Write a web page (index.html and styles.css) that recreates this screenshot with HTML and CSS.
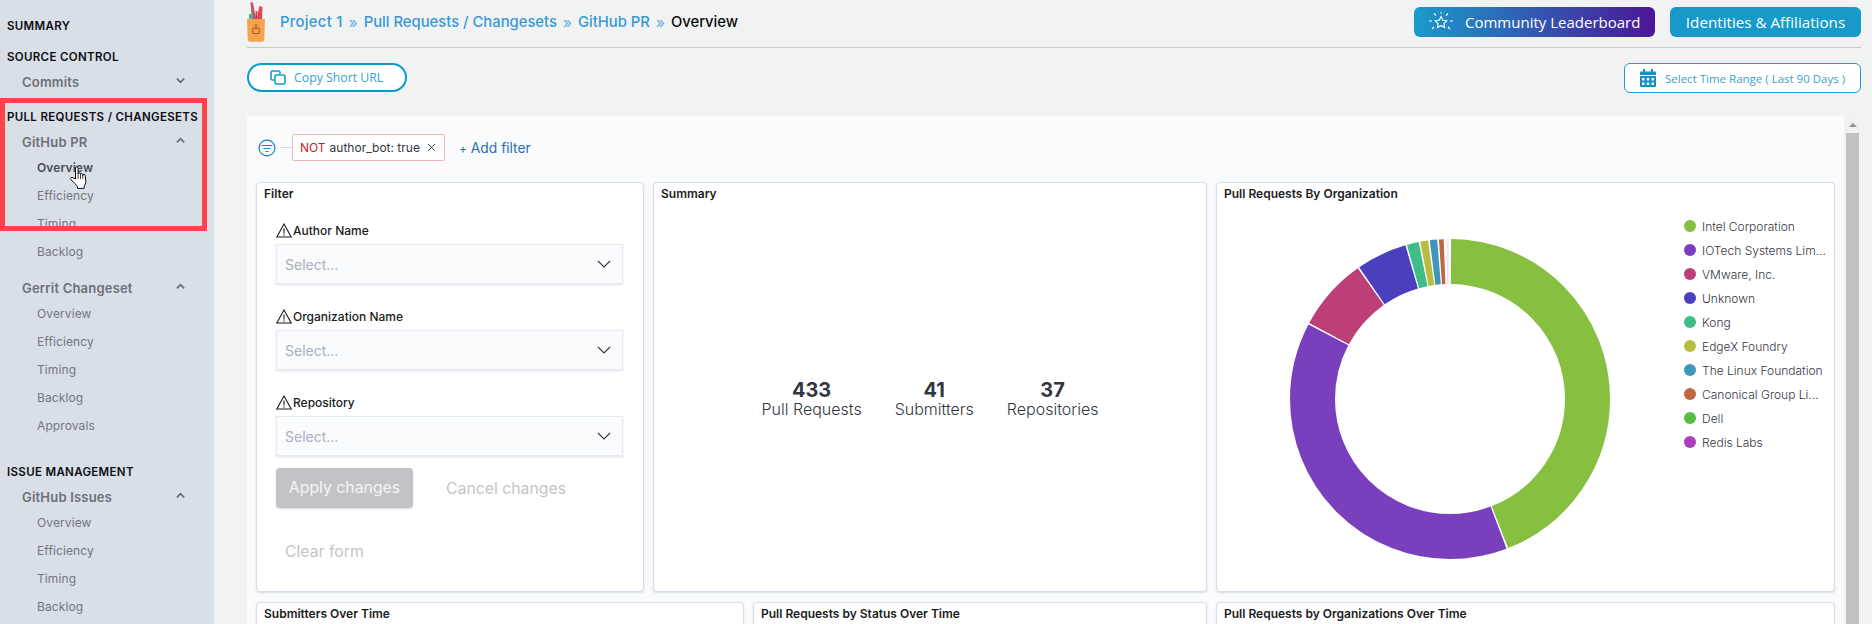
FILE: index.html
```html
<!DOCTYPE html>
<html lang="en">
<head>
<meta charset="utf-8">
<title>GitHub PR Overview</title>
<link rel="stylesheet" href="styles.css">
</head>
<body>
<aside class="sidebar">
  <h3 class="sec sec-first">SUMMARY</h3>
  <h3 class="sec sec-source">SOURCE CONTROL</h3>
  <div class="grp"><span>Commits</span><svg class="chev" viewBox="0 0 10 7"><path d="M1 1.500l4 4 4-4"/></svg></div>
  <h3 class="sec sec-pr">PULL REQUESTS / CHANGESETS</h3>
  <div class="grp"><span>GitHub PR</span><svg class="chev" viewBox="0 0 10 7"><path d="M1 5.500l4-4 4 4"/></svg></div>
  <ul class="subs">
    <li class="active">Overview</li><li>Efficiency</li><li>Timing</li><li>Backlog</li>
  </ul>
  <div class="grp grp-gerrit"><span>Gerrit Changeset</span><svg class="chev" viewBox="0 0 10 7"><path d="M1 5.500l4-4 4 4"/></svg></div>
  <ul class="subs">
    <li>Overview</li><li>Efficiency</li><li>Timing</li><li>Backlog</li><li>Approvals</li>
  </ul>
  <h3 class="sec sec-issue">ISSUE MANAGEMENT</h3>
  <div class="grp"><span>GitHub Issues</span><svg class="chev" viewBox="0 0 10 7"><path d="M1 5.500l4-4 4 4"/></svg></div>
  <ul class="subs">
    <li>Overview</li><li>Efficiency</li><li>Timing</li><li>Backlog</li>
  </ul>
</aside>

<main class="main">
  <header class="topbar">
    <svg class="logo" viewBox="0 0 18 40">
      <path d="M3.500 0l2.500.5 3 17H5z" fill="#c4546a"/>
      <path d="M9.500 17l3-13 3 1-.5 12z" fill="#e2494f"/>
      <path d="M8 17l.8-8 1.700.3-.5 7.700z" fill="#c9455a"/>
      <rect x="2" y="12" width="4" height="5" fill="#4fae9b"/>
      <path d="M0 17h18l-.8 21q-.1 1.800-2 1.800H2.800q-1.900 0-2-1.800z" fill="#f7a24d"/>
      <path d="M5.800 26h6.400v5.500H5.800zM9 22.500v5M7.500 24L9 22.500l1.500 1.500" fill="none" stroke="#a5602a" stroke-width="1"/>
    </svg>
    <nav class="crumbs">
      <a>Project 1</a><i>»</i><a>Pull Requests / Changesets</a><i>»</i><a>GitHub PR</a><i>»</i><b>Overview</b>
    </nav>
    <button class="btn-top btn-grad">
      <svg class="star" viewBox="0 0 24 20" fill="none" stroke="#fff" stroke-width="1.100">
        <path d="M12 4.500l1.800 3.700 4 .6-2.900 2.800.7 4-3.600-1.900-3.600 1.900.7-4-2.900-2.800 4-.6z"/>
        <path d="M5 1.500l2 2M19 1.500l-2 2M0 9h3M21 9h3M3 17l2-2M21 17l-2-2M12 0v1.500"/>
      </svg>
      Community Leaderboard
    </button>
    <button class="btn-top btn-plain">Identities &amp; Affiliations</button>
  </header>

  <div class="toolbar">
    <button class="btn-copy">
      <svg class="ico-copy" viewBox="0 0 16 15" fill="none" stroke="#159ac9" stroke-width="1.600">
        <path d="M4 10H2.500Q1 10 1 8.500V2.500Q1 1 2.500 1h6Q10 1 10 2.500V4"/>
        <rect x="5" y="5" width="10" height="9" rx="1.500"/>
      </svg>
      Copy Short URL
    </button>
    <button class="btn-range">
      <svg class="ico-cal" viewBox="0 0 16 18" fill="#1390c4">
        <rect x="3" y="0" width="2" height="4"/><rect x="11" y="0" width="2" height="4"/>
        <path d="M0 3.500q0-1 1-1h14q1 0 1 1V6H0z"/>
        <path fill-rule="evenodd" d="M0 7h16v10q0 1-1 1H1q-1 0-1-1zM2 9v2.500h2.500V9zM6.700 9v2.500h2.600V9zM11.500 9v2.500H14V9zM2 13.500V16h2.500v-2.500zM6.700 13.500V16h2.600v-2.500zM11.500 13.500V16H14v-2.500z"/>
      </svg>
      Select Time Range ( Last 90 Days )
    </button>
  </div>

  <div class="content">
    <section class="panel">
      <div class="filterbar">
        <svg class="ico-filter" viewBox="0 0 18 18" fill="none" stroke="#1f7fc4" stroke-width="1.200">
          <circle cx="9" cy="9" r="7.900"/><path d="M3.500 6.500h11M5.500 9.500h7M7.500 12.500h3"/>
        </svg>
        <span class="link-line"></span>
        <span class="pill"><span class="pill-not">NOT</span><span class="pill-text">author_bot: true</span>
          <svg class="ico-x" viewBox="0 0 10 10" fill="none" stroke="#343741" stroke-width="1"><path d="M1 1l8 8M9 1l-8 8"/></svg>
        </span>
        <a class="addfilter"><span class="plus">+</span> Add filter</a>
      </div>

      <div class="row row-a">
        <article class="card">
          <h4 class="card-title">Filter</h4>
          <form class="form">
            <div class="field">
              <label class="lab"><svg class="warn" viewBox="0 0 16 15" fill="none" stroke="#1a1c21" stroke-width="1.100"><path d="M8 1L.8 14h14.400z"/><path d="M8 5.500v5M8 11.500v1.300"/></svg>Author Name</label>
              <div class="select"><span>Select...</span><svg class="sel-chev" viewBox="0 0 14 8" fill="none" stroke="#343741" stroke-width="1.100"><path d="M1 1l6 6 6-6"/></svg></div>
            </div>
            <div class="field">
              <label class="lab"><svg class="warn" viewBox="0 0 16 15" fill="none" stroke="#1a1c21" stroke-width="1.100"><path d="M8 1L.8 14h14.400z"/><path d="M8 5.500v5M8 11.500v1.300"/></svg>Organization Name</label>
              <div class="select"><span>Select...</span><svg class="sel-chev" viewBox="0 0 14 8" fill="none" stroke="#343741" stroke-width="1.100"><path d="M1 1l6 6 6-6"/></svg></div>
            </div>
            <div class="field">
              <label class="lab"><svg class="warn" viewBox="0 0 16 15" fill="none" stroke="#1a1c21" stroke-width="1.100"><path d="M8 1L.8 14h14.400z"/><path d="M8 5.500v5M8 11.500v1.300"/></svg>Repository</label>
              <div class="select"><span>Select...</span><svg class="sel-chev" viewBox="0 0 14 8" fill="none" stroke="#343741" stroke-width="1.100"><path d="M1 1l6 6 6-6"/></svg></div>
            </div>
            <div class="actions">
              <span class="apply">Apply changes</span>
              <span class="cancel">Cancel changes</span>
            </div>
            <span class="clear">Clear form</span>
          </form>
        </article>

        <article class="card">
          <h4 class="card-title">Summary</h4>
          <div class="stats">
            <div class="stat"><strong>433</strong><span>Pull Requests</span></div>
            <div class="stat"><strong>41</strong><span>Submitters</span></div>
            <div class="stat"><strong>37</strong><span>Repositories</span></div>
          </div>
        </article>

        <article class="card">
          <h4 class="card-title">Pull Requests By Organization</h4>
          <div class="pie-body">
            <svg class="donut" viewBox="0 0 320 320">
              <g fill="none" stroke-width="45" transform="rotate(-90 160 160)">
                <circle cx="160" cy="160" r="137.500" pathLength="360" stroke="#87bf40" stroke-dasharray="158.300 360" stroke-dashoffset="-0.400"/>
                <circle cx="160" cy="160" r="137.500" pathLength="360" stroke="#7a3fbd" stroke-dasharray="138.500 360" stroke-dashoffset="-159.300"/>
                <circle cx="160" cy="160" r="137.500" pathLength="360" stroke="#bd3f77" stroke-dasharray="26.400 360" stroke-dashoffset="-298.400"/>
                <circle cx="160" cy="160" r="137.500" pathLength="360" stroke="#4a3fbd" stroke-dasharray="18.400 360" stroke-dashoffset="-325.400"/>
                <circle cx="160" cy="160" r="137.500" pathLength="360" stroke="#3fbd88" stroke-dasharray="4.300 360" stroke-dashoffset="-344.400"/>
                <circle cx="160" cy="160" r="137.500" pathLength="360" stroke="#b9bd3f" stroke-dasharray="2.800 360" stroke-dashoffset="-349.300"/>
                <circle cx="160" cy="160" r="137.500" pathLength="360" stroke="#3f96bd" stroke-dasharray="2.700 360" stroke-dashoffset="-352.700"/>
                <circle cx="160" cy="160" r="137.500" pathLength="360" stroke="#bd663f" stroke-dasharray="1.700 360" stroke-dashoffset="-356"/>
                <circle cx="160" cy="160" r="137.500" pathLength="360" stroke="#e8e4ee" stroke-dasharray="0.500 360" stroke-dashoffset="-358.600"/>
                <circle cx="160" cy="160" r="137.500" pathLength="360" stroke="#e8e4ee" stroke-dasharray="0.300 360" stroke-dashoffset="-359.300"/>
              </g>
            </svg>
            <ul class="legend">
              <li><i class="dot d1"></i><span>Intel Corporation</span></li>
              <li><i class="dot d2"></i><span>IOTech Systems Lim...</span></li>
              <li><i class="dot d3"></i><span>VMware, Inc.</span></li>
              <li><i class="dot d4"></i><span>Unknown</span></li>
              <li><i class="dot d5"></i><span>Kong</span></li>
              <li><i class="dot d6"></i><span>EdgeX Foundry</span></li>
              <li><i class="dot d7"></i><span>The Linux Foundation</span></li>
              <li><i class="dot d8"></i><span>Canonical Group Li...</span></li>
              <li><i class="dot d9"></i><span>Dell</span></li>
              <li><i class="dot d10"></i><span>Redis Labs</span></li>
            </ul>
          </div>
        </article>
      </div>

      <div class="row row-b">
        <article class="card"><h4 class="card-title">Submitters Over Time</h4></article>
        <article class="card"><h4 class="card-title">Pull Requests by Status Over Time</h4></article>
        <article class="card"><h4 class="card-title">Pull Requests by Organizations Over Time</h4></article>
      </div>
    </section>
    <div class="scroll">
      <span class="scroll-up"></span>
      <span class="scroll-thumb"></span>
    </div>
  </div>
</main>

<div class="highlight"></div>
<svg class="hand" viewBox="0 0 18 23">
  <path d="M5.500 13V2.200Q5.500.7 6.800.7t1.300 1.500V8q0-1.100 1.200-1.100T10.500 8v.6q0-1 1.100-1t1.200 1v.8q0-1 1.100-1t1.300 1.100l.6 5.600q.2 2-.8 3.700l-.8 1.400v2.200H7.500v-1.500q-.6-1.300-2.500-3.200L1 13.500q-.7-1 0-1.700.9-.8 2-.1z" fill="#fff" stroke="#111" stroke-width="1" stroke-linejoin="round"/>
  <path d="M8.100 8v5M10.500 8.500V13M12.800 9v4" fill="none" stroke="#111" stroke-width=".8"/>
</svg>
</body>
</html>
```

FILE: styles.css
```css
* { box-sizing: border-box; }
html, body { margin: 0; height: 624px; overflow: hidden; }
body {
  display: flex;
  background: #f1f3f3;
  font-family: Inter, "Liberation Sans", sans-serif;
  color: #343741;
}
h3, h4, ul { margin: 0; padding: 0; list-style: none; }

/* sidebar */
.sidebar {
  flex: 0 0 214px;
  height: 624px;
  overflow: hidden;
  background: #d9dfe7;
  padding-top: 14px;
}
.sec {
  height: 24px;
  line-height: 24px;
  padding-left: 7px;
  font-size: 11.500px;
  font-weight: 600;
  color: #0b0d12;
  white-space: nowrap;
  letter-spacing: .33px;
}
.sec-source { margin-top: 7px; }
.sec-pr { margin-top: 10px; }
.sec-issue { margin-top: 20px; }
.grp {
  display: flex;
  align-items: center;
  justify-content: space-between;
  height: 26px;
  padding: 0 29px 0 22px;
  font-size: 13px;
  font-weight: 600;
  letter-spacing: .2px;
  color: #6c7077;
}
.grp-gerrit { margin-top: 9px; }
.chev {
  width: 9px;
  height: 7px;
  margin-top: -4px;
  fill: none;
  stroke: #676b72;
  stroke-width: 2;
}
.subs { margin-top: -1px; }
.subs li {
  height: 28px;
  line-height: 28px;
  padding-left: 37px;
  font-size: 12px;
  letter-spacing: .1px;
  color: #72767d;
}
.subs .active { color: #4a4e55; font-weight: 600; }

/* main */
.main {
  flex: 1;
  min-width: 0;
  height: 624px;
  overflow: hidden;
  padding: 0 11px 0 33px;
}
.topbar {
  display: flex;
  align-items: center;
  height: 48px;
  border-bottom: 1px solid #c9c9c9;
  padding-bottom: 3px;
}
.logo { width: 18px; height: 40px; margin-top: 2px; flex: none; align-self: flex-start; }
.crumbs {
  flex: 1;
  display: flex;
  align-items: center;
  margin-left: 15px;
  font-size: 14.800px;
  font-weight: 500;
  white-space: nowrap;
}
.crumbs a { color: #3a97d8; }
.crumbs a:first-child { letter-spacing: .3px; }
.crumbs b { color: #0a0c10; font-weight: 500; }
.crumbs i {
  width: 21px;
  text-align: center;
  font-style: normal;
  color: #6fb3e3;
  font-size: 15px;
}
.btn-top {
  display: flex;
  align-items: center;
  height: 30px;
  border: 0;
  border-radius: 6px;
  color: #fff;
  font-family: "Open Sans", sans-serif;
  font-size: 15px;
  padding: 0;
  flex: none;
  white-space: nowrap;
}
.btn-grad {
  width: 241px;
  padding-left: 15px;
  background: linear-gradient(90deg, #1a9bca, #4c1697);
}
.star { width: 24px; height: 20px; margin-right: 12px; }
.btn-plain {
  width: 191px;
  margin-left: 15px;
  justify-content: center;
  background: #179ac9;
  font-size: 15.200px;
}
.toolbar {
  display: flex;
  justify-content: space-between;
  margin-top: 15px;
  height: 30px;
}
.btn-copy {
  display: flex;
  align-items: center;
  width: 160px;
  height: 29px;
  padding: 0 0 0 21px;
  border: 2px solid #0b9ac9;
  border-radius: 15px;
  background: #fff;
  color: #3d9fcb;
  font-family: "Open Sans", sans-serif;
  font-size: 12.300px;
  white-space: nowrap;
}
.ico-copy { width: 16px; height: 15px; margin-right: 8px; }
.btn-range {
  display: flex;
  align-items: center;
  width: 237px;
  height: 30px;
  padding: 0 0 0 15px;
  border: 1px solid #1a9bca;
  border-radius: 6px;
  background: #fff;
  color: #3d9fcb;
  font-family: "Open Sans", sans-serif;
  font-size: 11.500px;
  white-space: nowrap;
}
.ico-cal { width: 16px; height: 18px; margin-right: 9px; }

.content { display: flex; margin-top: 23px; height: 508px; }
.panel {
  flex: 1;
  min-width: 0;
  overflow: hidden;
  background: #fafbfd;
  padding: 18px 0 0 9px;
}
.scroll {
  flex: 0 0 17px;
  display: flex;
  flex-direction: column;
  align-items: center;
  background: #f1f1f1;
}
.scroll-up {
  flex: none;
  width: 0;
  height: 0;
  margin: 7px 0 6px;
  border-left: 4px solid transparent;
  border-right: 4px solid transparent;
  border-bottom: 4px solid #8f8f8f;
}
.scroll-thumb { flex: 1; width: 13px; background: #c1c1c1; }

.filterbar { display: flex; align-items: center; height: 27px; }
.ico-filter { width: 18px; height: 18px; margin-left: 2px; }
.link-line { width: 11px; height: 1px; margin-left: 5px; background: #d3dae6; }
.pill {
  display: flex;
  align-items: center;
  width: 153px;
  height: 27px;
  padding-left: 7px;
  border: 1px solid #eeb7b4;
  border-radius: 2px;
  background: #fff;
  font-size: 12px;
  white-space: nowrap;
}
.pill-not { color: #bd271e; }
.pill-text { margin-left: 4px; }
.ico-x { width: 9px; height: 9px; margin-left: 7px; }
.addfilter { margin-left: 14px; color: #2a6fb0; font-size: 13.800px; }
.plus { font-size: 12px; }

.row { display: grid; column-gap: 9px; }
.row-a { grid-template-columns: 388px 554px 619px; margin-top: 21px; height: 410px; }
.row-b { grid-template-columns: 488px 454px 619px; margin-top: 10px; height: 60px; }
.card {
  display: flex;
  flex-direction: column;
  min-width: 0;
  background: #fff;
  border: 1px solid #d8dde9;
  border-radius: 4px;
  box-shadow: 0 1px 2px rgba(152, 162, 179, .35);
}
.card-title {
  flex: none;
  height: 23px;
  line-height: 22px;
  padding-left: 7px;
  font-size: 12px;
  font-weight: 600;
  color: #1a1c21;
  white-space: nowrap;
}

/* filter form */
.form { padding: 14px 0 0 19px; }
.field { width: 347px; }
.field + .field { margin-top: 22px; }
.lab {
  display: flex;
  align-items: center;
  height: 24px;
  padding-bottom: 3px;
  font-size: 12px;
  font-weight: 500;
  color: #1a1c21;
}
.warn { width: 16px; height: 15px; margin-right: 1px; }
.select {
  display: flex;
  align-items: center;
  justify-content: space-between;
  height: 40px;
  padding: 0 11px 0 8px;
  background: #fafbfd;
  border: 1px solid #e6e9f1;
  box-shadow: 0 1px 2px rgba(152, 162, 179, .3);
  font-size: 14px;
  color: #a9aec0;
}
.sel-chev { width: 14px; height: 8px; }
.actions {
  display: flex;
  align-items: center;
  margin-top: 12px;
  font-size: 15.800px;
}
.apply {
  width: 137px;
  height: 40px;
  line-height: 40px;
  text-align: center;
  border-radius: 4px;
  background: #c2c3c6;
  color: #f4f4f5;
  box-shadow: 0 1px 2px rgba(152, 162, 179, .4);
}
.cancel { margin-left: 33px; color: #c4c5c8; white-space: nowrap; }
.clear {
  display: block;
  margin: 32px 0 0 9px;
  height: 24px;
  line-height: 24px;
  font-size: 15.800px;
  color: #c4c5c8;
}

/* summary */
.stats {
  flex: 1;
  display: flex;
  align-items: center;
  justify-content: center;
  gap: 33px;
}
.stat { display: flex; flex-direction: column; align-items: center; }
.stat strong { font-size: 20px; line-height: 20px; font-weight: 700; color: #343741; }
.stat span { font-size: 16px; line-height: 18px; font-weight: 300; color: #343741; }

/* donut */
.pie-body { display: flex; min-width: 0; }
.donut { width: 320px; height: 320px; margin: 33px 0 0 73px; flex: none; }
.legend { margin: 8px 0 0 74px; width: 145px; }
.legend li {
  display: flex;
  align-items: center;
  height: 24px;
  font-size: 12px;
  font-weight: 300;
  color: #343741;
  white-space: nowrap;
}
.dot { flex: none; width: 12px; height: 12px; margin-right: 6px; border-radius: 50%; }
.d1 { background: #87bf40; }
.d2 { background: #7a3fbd; }
.d3 { background: #bd3f77; }
.d4 { background: #4a3fbd; }
.d5 { background: #3fbd88; }
.d6 { background: #b9bd3f; }
.d7 { background: #3f96bd; }
.d8 { background: #bd663f; }
.d9 { background: #55bd3f; }
.d10 { background: #a83fbd; }

/* overlays */
.highlight {
  position: absolute;
  left: 0;
  top: 98px;
  width: 207px;
  height: 133px;
  border: 5px solid #ff4348;
}
.hand { position: absolute; left: 70px; top: 166px; width: 18px; height: 23px; }
```
